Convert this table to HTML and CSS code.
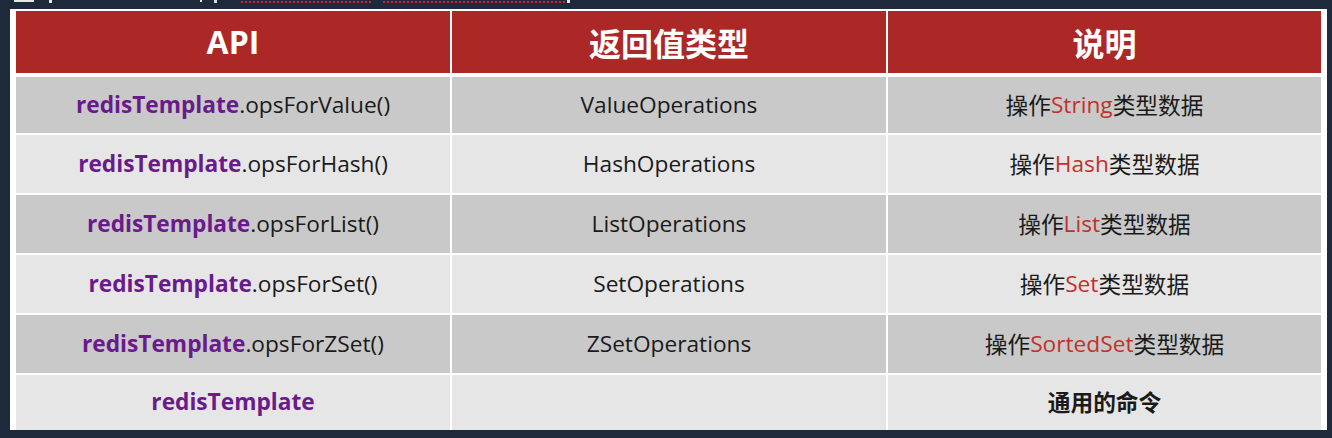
FILE: index.html
```html
<!DOCTYPE html>
<html lang="zh">
<head>
<meta charset="utf-8">
<title>RedisTemplate API</title>
<link rel="stylesheet" href="styles.css">
</head>
<body>
<div class="topline">
  <span class="tl-a"></span>
  <span class="tl-b"></span>
  <span class="tl-c"></span>
  <span class="tl-d"></span>
  <span class="tl-red tl-red1"></span>
  <span class="tl-red tl-red2"></span>
  <span class="tl-e"></span>
</div>
<div class="frame">
  <div class="grid head">
    <div class="cell">API</div>
    <div class="cell">返回值类型</div>
    <div class="cell">说明</div>
  </div>
  <div class="grid body">
    <div class="cell r1 dark"><span class="obj">redisTemplate</span>.opsForValue()</div>
    <div class="cell r1 dark">ValueOperations</div>
    <div class="cell r1 dark">操作<span class="kw">String</span>类型数据</div>

    <div class="cell light"><span class="obj">redisTemplate</span>.opsForHash()</div>
    <div class="cell light">HashOperations</div>
    <div class="cell light">操作<span class="kw">Hash</span>类型数据</div>

    <div class="cell dark"><span class="obj">redisTemplate</span>.opsForList()</div>
    <div class="cell dark">ListOperations</div>
    <div class="cell dark">操作<span class="kw">List</span>类型数据</div>

    <div class="cell light"><span class="obj">redisTemplate</span>.opsForSet()</div>
    <div class="cell light">SetOperations</div>
    <div class="cell light">操作<span class="kw">Set</span>类型数据</div>

    <div class="cell dark"><span class="obj">redisTemplate</span>.opsForZSet()</div>
    <div class="cell dark">ZSetOperations</div>
    <div class="cell dark">操作<span class="kw">SortedSet</span>类型数据</div>

    <div class="cell light"><span class="obj">redisTemplate</span></div>
    <div class="cell light"></div>
    <div class="cell light strong">通用的命令</div>
  </div>
</div>
</body>
</html>
```

FILE: styles.css
```css
html, body {
  margin: 0;
  padding: 0;
}
body {
  background: #1e293b;
  width: 1332px;
  height: 438px;
  overflow: hidden;
  font-family: "Open Sans", "Noto Sans CJK SC", sans-serif;
}

.topline {
  height: 9px;
  display: flex;
  align-items: flex-start;
}
.topline span { display: block; }
.tl-a { margin-left: 14px; width: 20px; height: 2px; background: #e8e8e8; }
.tl-b { margin-left: 15px; width: 3px; height: 3px; background: #e8e8e8; }
.tl-c { margin-left: 148px; width: 2px; height: 2px; background: #e8e8e8; }
.tl-d { margin-left: 12px; width: 3px; height: 3px; background: #d8d8d8; }
.tl-red { height: 2px; margin-top: 1px; border-top: 2px dotted #e02020; }
.tl-red1 { margin-left: 24px; width: 130px; }
.tl-red2 { margin-left: 12px; width: 182px; }
.tl-e { margin-left: 2px; width: 3px; height: 3px; background: #e8e8e8; }

.frame {
  margin-left: 10px;
  width: 1305px;
  background: #ffffff;
  padding: 2px 6px 0 6px;
}

.grid {
  display: grid;
  grid-template-columns: 434px 434px 433px;
  column-gap: 2px;
  row-gap: 2px;
}

.cell {
  display: flex;
  align-items: center;
  justify-content: center;
  font-size: 22.7px;
  color: #1a1a1a;
  white-space: nowrap;
}

.head .cell {
  height: 62px;
  background: #ac2826;
  color: #ffffff;
  font-weight: 700;
  font-size: 32px;
  padding-bottom: 1px;
  box-sizing: border-box;
}

.body {
  margin-top: 4px;
  grid-template-rows: 56px 58px 58px 58px 58px 55px;
}
.body .cell {
  padding-bottom: 2px;
}

.dark { background: #c9c9c9; }
.light { background: #e6e6e6; }

.obj {
  color: #6a1a8a;
  font-weight: 700;
}
.kw { color: #c4302b; }
.strong { font-weight: 700; }
```
